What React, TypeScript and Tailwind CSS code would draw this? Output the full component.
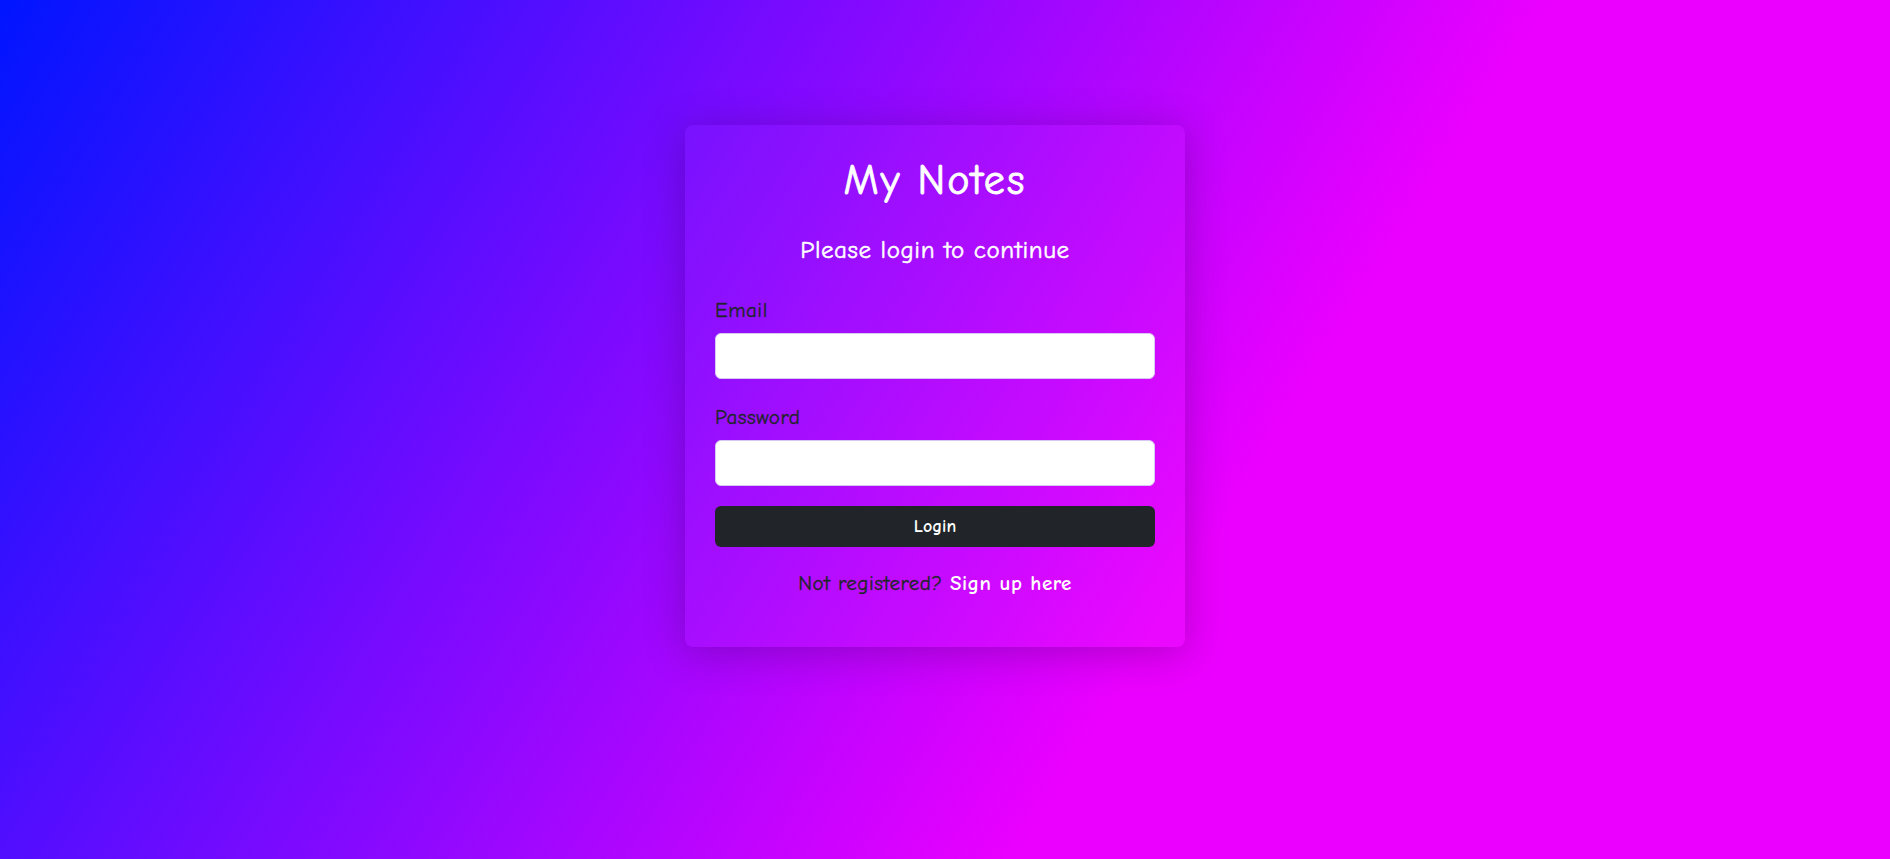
import React from "react";

export default function App() {
  const font = { fontFamily: '"Comic Sans MS", "Comic Neue", "Noto Sans", sans-serif' };
  return (
    <div
      className="min-h-screen w-full bg-[linear-gradient(122deg,#0015ff_0%,#eb00ff_64%)] flex justify-center pt-[125px] pr-[20px]"
      style={font}
    >
      <div className="w-[500px] h-[522px] rounded-lg bg-white/[0.03] shadow-[0_6px_40px_rgba(40,0,70,0.3)] px-[30px] pt-[32px] pb-[49px] flex flex-col [-webkit-text-stroke:0.35px_currentColor]">
        <h1 className="text-[42px] leading-[48px] tracking-[2px] text-white text-center [-webkit-text-stroke:0.9px_currentColor]">
          My Notes
        </h1>
        <h4 className="mt-[30px] text-[25px] leading-[29px] tracking-[0.6px] text-white text-center [-webkit-text-stroke:0.5px_currentColor]">
          Please login to continue
        </h4>
        <label className="mt-[31px] text-[21px] leading-[30px] tracking-[0.5px] text-[#212529] mb-2 block">Email</label>
        <input
          type="email"
          className="h-[46px] w-full rounded-md bg-white border border-[#d6c8f0] outline-none px-3"
        />
        <label className="mt-[23px] text-[21px] leading-[30px] tracking-[0.5px] text-[#212529] mb-2 block">Password</label>
        <input
          type="password"
          className="h-[46px] w-full rounded-md bg-white border border-[#d6c8f0] outline-none px-3"
        />
        <button className="mt-5 h-[41px] w-full rounded-md bg-[#212529] text-white text-[18px] font-bold [-webkit-text-stroke:0px_currentColor]">
          Login
        </button>
        <p className="mt-[21px] text-[21px] leading-[30px] tracking-[0.5px] text-center text-[#212529]">
          Not registered? <a className="text-white font-bold [-webkit-text-stroke:0px_currentColor]">Sign up here</a>
        </p>
      </div>
    </div>
  );
}
